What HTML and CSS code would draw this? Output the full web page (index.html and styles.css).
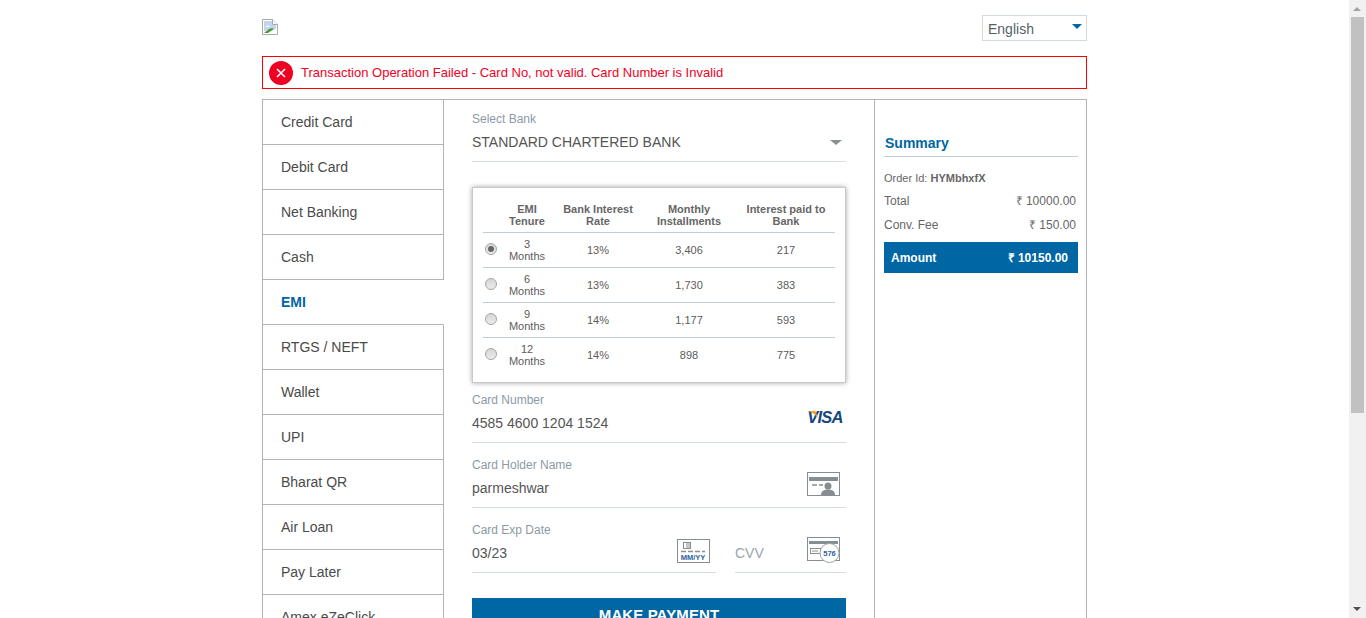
FILE: index.html
```html
<!DOCTYPE html>
<html lang="en">
<head>
  <meta charset="UTF-8">
  <meta name="viewport" content="width=device-width, initial-scale=1.0">
  <title>Payment</title>
  <link rel="stylesheet" href="styles.css">
</head>
<body>
  <div class="page">
    <!-- Header -->
    <div class="header">
      <svg class="broken-img" width="16" height="16" viewBox="0 0 16 16">
        <path d="M.5.5h10l5 5v10H.5z" fill="#fff" stroke="#a9a9a9"/>
        <path d="M2 2h8v4h4v4L2 12z" fill="#c3d4ee"/>
        <path d="M3 8c2-2 4-2 5 0H3z" fill="#fff"/>
        <path d="M2 14l5-4c2-1 4-1 5 0l-6 4z" fill="#4f9a3a"/>
        <path d="M10.500.500v5h5" fill="#fff" stroke="#a9a9a9"/>
        <path d="M9 15l6-6v6z" fill="#fff"/>
      </svg>
      <div class="lang">English</div>
    </div>

    <!-- Error -->
    <div class="alert">
      <svg class="alert-icon" width="24" height="24" viewBox="0 0 24 24">
        <circle cx="12" cy="12" r="12" fill="#ee0022"/>
        <path d="M8 8l8 8M16 8l-8 8" stroke="#fff" stroke-width="1.600" fill="none"/>
      </svg>
      <span>Transaction Operation Failed - Card No, not valid. Card Number is Invalid</span>
    </div>

    <div class="panel">
      <!-- Payment modes -->
      <ul class="tabs">
        <li class="tab">Credit Card</li>
        <li class="tab">Debit Card</li>
        <li class="tab">Net Banking</li>
        <li class="tab">Cash</li>
        <li class="tab active">EMI</li>
        <li class="tab">RTGS / NEFT</li>
        <li class="tab">Wallet</li>
        <li class="tab">UPI</li>
        <li class="tab">Bharat QR</li>
        <li class="tab">Air Loan</li>
        <li class="tab">Pay Later</li>
        <li class="tab">Amex eZeClick</li>
      </ul>

      <!-- EMI form -->
      <div class="form">
        <div class="field bank">
          <label>Select Bank</label>
          <div class="value">STANDARD CHARTERED BANK <i class="caret"></i></div>
        </div>

        <div class="emi-box">
          <table class="emi">
            <thead>
              <tr>
                <th class="c-radio"></th>
                <th class="c-tenure">EMI<br>Tenure</th>
                <th class="c-rate">Bank Interest Rate</th>
                <th class="c-month">Monthly Installments</th>
                <th class="c-paid">Interest paid to Bank</th>
              </tr>
            </thead>
            <tbody>
              <tr>
                <td><input type="radio" name="emi" class="radio" checked></td>
                <td>3<br>Months</td><td>13%</td><td>3,406</td><td>217</td>
              </tr>
              <tr>
                <td><input type="radio" name="emi" class="radio"></td>
                <td>6<br>Months</td><td>13%</td><td>1,730</td><td>383</td>
              </tr>
              <tr>
                <td><input type="radio" name="emi" class="radio"></td>
                <td>9<br>Months</td><td>14%</td><td>1,177</td><td>593</td>
              </tr>
              <tr>
                <td><input type="radio" name="emi" class="radio"></td>
                <td>12<br>Months</td><td>14%</td><td>898</td><td>775</td>
              </tr>
            </tbody>
          </table>
        </div>

        <div class="field">
          <label>Card Number</label>
          <div class="value">4585 4600 1204 1524
            <svg class="visa" width="34" height="16" viewBox="0 0 34 16">
              <text x="33.500" y="13" text-anchor="end" class="visa-text">VISA</text>
              <path d="M0 1h5c1 0 2 .5 2.200 1.500L8.500 8C7 5 4 2.500 0 1.500z" fill="#f2a024"/>
            </svg>
          </div>
        </div>

        <div class="field">
          <label>Card Holder Name</label>
          <div class="value">parmeshwar
            <svg class="field-icon" width="33" height="24" viewBox="0 0 33 24">
              <rect x=".5" y=".5" width="32" height="23" fill="#fff" stroke="#868e92"/>
              <rect x="2" y="5" width="29" height="4" fill="#868e92"/>
              <path d="M5 13h5M12 13h4" stroke="#868e92" stroke-width="1.500"/>
              <circle cx="21" cy="14" r="3.500" fill="#868e92"/>
              <path d="M14 23c0-4 3-5.500 7-5.500s7 1.500 7 5.500z" fill="#868e92"/>
            </svg>
          </div>
        </div>

        <div class="field-row">
          <div class="field exp">
            <label>Card Exp Date</label>
            <div class="value">03/23
              <svg class="field-icon" width="33" height="24" viewBox="0 0 33 24">
                <rect x=".5" y=".5" width="32" height="23" fill="#fff" stroke="#868e92"/>
                <rect x="6.500" y="3.500" width="7" height="6" fill="none" stroke="#868e92"/>
                <path d="M10 4v5M12 4v5" stroke="#868e92"/>
                <path d="M4 12.500h5M11 12.500h5M18 12.500h5M25 12.500h3" stroke="#868e92" stroke-width="1.500"/>
                <text x="16" y="21" text-anchor="middle" class="mmyy">MM/YY</text>
              </svg>
            </div>
          </div>
          <div class="field cvv">
            <label class="hidden-label">CVV</label>
            <div class="value placeholder">CVV
              <svg class="field-icon cvv-icon" width="33" height="27" viewBox="0 0 33 27">
                <rect x=".5" y=".5" width="32" height="23" fill="#fff" stroke="#868e92"/>
                <rect x="2" y="4" width="29" height="3" fill="#868e92"/>
                <rect x="3.500" y="11.500" width="10" height="5" fill="none" stroke="#868e92"/>
                <path d="M5 14h6" stroke="#868e92"/>
                <circle cx="22.500" cy="16" r="9.500" fill="#fff" stroke="#9aa3a8"/>
                <text x="22.500" y="19" text-anchor="middle" class="cvv-text">576</text>
              </svg>
            </div>
          </div>
        </div>

        <button class="pay">MAKE PAYMENT</button>
      </div>

      <!-- Summary -->
      <div class="summary">
        <h3>Summary</h3>
        <p class="order">Order Id: <b>HYMbhxfX</b></p>
        <div class="line first"><span>Total</span><span>₹ 10000.00</span></div>
        <div class="line"><span>Conv. Fee</span><span>₹ 150.00</span></div>
        <div class="amount"><span>Amount</span><span>₹ 10150.00</span></div>
      </div>
    </div>
  </div>

  <!-- Scrollbar -->
  <div class="scrollbar">
    <i class="arrow up"></i>
    <div class="thumb"></div>
    <i class="arrow down"></i>
  </div>
</body>
</html>
```

FILE: styles.css
```css
html, body {
  height: 100%;
  overflow: hidden;
}

body {
  margin: 0;
  padding-right: 17px;
  box-sizing: border-box;
  background: #fff;
  font-family: "Liberation Sans", Arial, sans-serif;
  color: #555;
}

.page {
  width: 825px;
  margin: 0 auto;
  padding-top: 15px;
}

.header {
  display: flex;
  justify-content: space-between;
  height: 26px;
}

.broken-img {
  margin-top: 4px;
}

.lang {
  width: 105px;
  height: 26px;
  box-sizing: border-box;
  border: 1px solid #cfdce3;
  padding: 5px 5px;
  font-size: 14px;
  line-height: 17px;
  color: #555f66;
  position: relative;
}

.lang::after {
  content: "";
  position: absolute;
  right: 4px;
  top: 8px;
  border-left: 5px solid transparent;
  border-right: 5px solid transparent;
  border-top: 5px solid #0066a4;
}

.alert {
  display: flex;
  align-items: center;
  gap: 8px;
  height: 33px;
  margin-top: 15px;
  padding-left: 6px;
  box-sizing: border-box;
  border: 1px solid #f00;
  font-size: 13px;
  color: #f3001e;
}

.panel {
  display: flex;
  margin-top: 10px;
  border: 1px solid #b3b3b3;
}

.tabs {
  list-style: none;
  margin: 0;
  padding: 0;
  width: 181px;
  flex: none;
}

.tab {
  height: 45px;
  box-sizing: border-box;
  padding-left: 18px;
  line-height: 44px;
  font-size: 14px;
  color: #4a4a4a;
  border-right: 1px solid #b3b3b3;
  border-bottom: 1px solid #b3b3b3;
}

.tab.active {
  border-right-color: transparent;
  color: #0066a4;
  font-weight: bold;
}

.form {
  width: 431px;
  flex: none;
  box-sizing: border-box;
  padding: 12px 28px 20px;
  border-right: 1px solid #b3b3b3;
}

.field {
  margin-bottom: 15px;
}

.field label {
  display: block;
  height: 14px;
  line-height: 14px;
  font-size: 12px;
  color: #8c9aa5;
}

.value {
  display: flex;
  justify-content: space-between;
  align-items: center;
  height: 32px;
  padding-bottom: 3px;
  border-bottom: 1px solid #d3dce1;
  font-size: 14px;
  color: #555;
}

.bank {
  margin-bottom: 25px;
}

.caret {
  margin-right: 4px;
  border-left: 6px solid transparent;
  border-right: 6px solid transparent;
  border-top: 5px solid #8a8f93;
}

.emi-box {
  border: 1px solid #c8c8c8;
  box-shadow: 0 0 5px rgba(0, 0, 0, .35);
  padding: 10px;
  margin-bottom: 10px;
  height: 196px;
  box-sizing: border-box;
}

.emi {
  width: 352px;
  border-collapse: collapse;
  table-layout: fixed;
  font-size: 11px;
  line-height: 12px;
  color: #5c5c5c;
  text-align: center;
}

.emi th {
  padding: 5px 0 5px;
  border-bottom: 1px solid #bccfd9;
  font-weight: bold;
  color: #666;
}

.emi td {
  height: 34px;
  padding: 0;
  border-bottom: 1px solid #bccfd9;
}

.emi tr:last-child td {
  border-bottom: 0;
}

.c-radio { width: 16px; }
.c-tenure { width: 56px; }
.c-rate { width: 86px; }
.c-month { width: 96px; }
.c-paid { width: 98px; }

.radio {
  appearance: none;
  display: block;
  width: 12px;
  height: 12px;
  margin: -3px 0 0 2px;
  border: 1px solid #a6a6a6;
  border-radius: 50%;
  background: linear-gradient(#d6d6d6, #ececec);
  position: relative;
}

.radio:checked::after {
  content: "";
  position: absolute;
  left: 2px;
  top: 2px;
  width: 6px;
  height: 6px;
  border-radius: 50%;
  background: #666;
}

.visa {
  align-self: flex-start;
  margin: 3px 3px 0 0;
  overflow: visible;
}

.visa-text {
  font-size: 16.500px;
  font-weight: bold;
  font-style: italic;
  fill: #15477f;
  letter-spacing: -.8px;
}

.field-icon {
  align-self: flex-start;
  margin-right: 6px;
}

.mmyy {
  font-size: 7.500px;
  font-weight: bold;
  fill: #2a62a0;
}

.cvv-text {
  font-size: 7.500px;
  font-weight: bold;
  fill: #2a62a0;
}

.field-row {
  display: flex;
  justify-content: space-between;
}

.exp { width: 244px; }
.exp .field-icon { margin-top: 2px; }
.cvv { width: 111px; }

.placeholder {
  color: #9aa5ad;
}

.hidden-label {
  visibility: hidden;
}

.pay {
  display: block;
  width: 100%;
  height: 42px;
  margin-top: 10px;
  padding: 0 0 10px;
  border: 0;
  background: #0066a4;
  color: #fff;
  font: bold 15px "Liberation Sans", Arial, sans-serif;
  letter-spacing: .1px;
}

.summary {
  flex: 1;
  padding: 35px 8px 0 9px;
  font-size: 12px;
  color: #666;
}

.summary h3 {
  margin: 0;
  padding: 0 0 4px 1px;
  font-size: 14px;
  line-height: 17px;
  color: #0066a4;
  border-bottom: 1px solid #bccfd9;
}

.order {
  margin: 15px 0 0;
  font-size: 11px;
  line-height: 13px;
}

.line {
  display: flex;
  justify-content: space-between;
  padding-right: 2px;
  margin-top: 10px;
  line-height: 14px;
}

.line.first {
  margin-top: 9px;
}

.amount {
  display: flex;
  justify-content: space-between;
  align-items: center;
  height: 31px;
  margin-top: 10px;
  padding: 0 10px 0 7px;
  background: #0066a4;
  color: #fff;
  font-weight: bold;
}

.scrollbar {
  position: fixed;
  top: 0;
  right: 0;
  bottom: 0;
  width: 17px;
  background: #f1f1f1;
}

.thumb {
  position: absolute;
  top: 17px;
  left: 2px;
  width: 13px;
  height: 396px;
  background: #c1c1c1;
}

.arrow {
  position: absolute;
  left: 4px;
  border-left: 4.500px solid transparent;
  border-right: 4.500px solid transparent;
}

.arrow.up {
  top: 7px;
  border-bottom: 4.500px solid #a3a3a3;
}

.arrow.down {
  bottom: 7px;
  border-top: 4.500px solid #505050;
}
```
